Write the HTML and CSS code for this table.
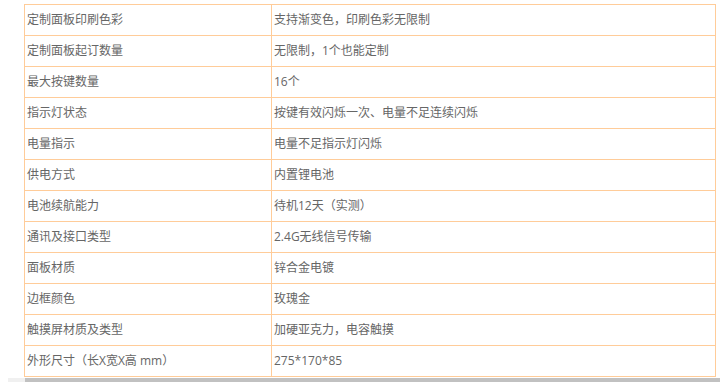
FILE: index.html
```html
<!DOCTYPE html>
<html lang="zh-CN">
<head>
<meta charset="utf-8">
<title>参数</title>
<link rel="stylesheet" href="styles.css">
</head>
<body>
<div class="page">
  <table class="spec">
    <colgroup><col class="c1"><col class="c2"></colgroup>
    <tr><td>定制面板印刷色彩</td><td>支持渐变色，印刷色彩无限制</td></tr>
    <tr><td>定制面板起订数量</td><td>无限制，1个也能定制</td></tr>
    <tr><td>最大按键数量</td><td>16个</td></tr>
    <tr><td>指示灯状态</td><td>按键有效闪烁一次、电量不足连续闪烁</td></tr>
    <tr><td>电量指示</td><td>电量不足指示灯闪烁</td></tr>
    <tr><td>供电方式</td><td>内置锂电池</td></tr>
    <tr><td>电池续航能力</td><td>待机12天（实测）</td></tr>
    <tr><td>通讯及接口类型</td><td>2.4G无线信号传输</td></tr>
    <tr><td>面板材质</td><td>锌合金电镀</td></tr>
    <tr><td>边框颜色</td><td>玫瑰金</td></tr>
    <tr><td>触摸屏材质及类型</td><td>加硬亚克力，电容触摸</td></tr>
    <tr><td>外形尺寸（长X宽X高 mm）</td><td>275*170*85</td></tr>
  </table>
  <div class="hscroll"><div class="thumb"></div></div>
</div>
</body>
</html>
```
FILE: styles.css
```css
html, body {
  margin: 0;
  padding: 0;
  background: #fff;
}
.page {
  width: 720px;
  height: 382px;
  overflow: hidden;
  padding-top: 4px;
  box-sizing: border-box;
}
.spec {
  margin-left: 24px;
  width: 692px;
  border-collapse: collapse;
  table-layout: fixed;
  font-family: "Open Sans", "Noto Sans CJK SC", sans-serif;
  font-size: 12px;
  color: #666;
}
.spec .c1 { width: 247px; }
.spec td {
  border: 1px solid #ffcc99;
  height: 31px;
  padding: 0 0 0 2px;
  box-sizing: border-box;
  line-height: 16px;
  vertical-align: middle;
  white-space: nowrap;
}
.hscroll {
  margin-top: 1px;
  margin-left: 8px;
  height: 5px;
  background: #f0f0f0;
  display: flex;
}
.thumb {
  margin-left: 17px;
  flex: 1;
  background: #c1c1c1;
}
```
